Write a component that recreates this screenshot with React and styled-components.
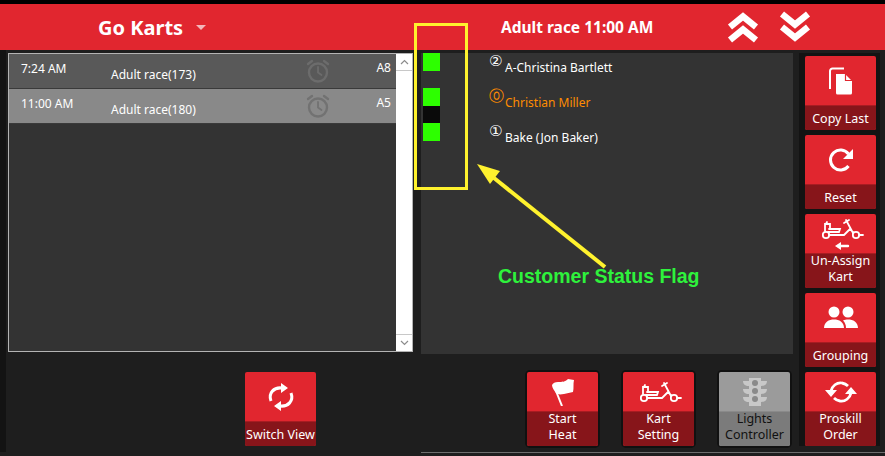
import React from 'react';
import styled, { createGlobalStyle } from 'styled-components';

const GlobalStyle = createGlobalStyle`
  html, body {
    margin: 0;
    padding: 0;
    background: #1e1e1e;
  }
`;

const Page = styled.div`
  position: relative;
  width: 885px;
  height: 456px;
  overflow: hidden;
  background: #1e1e1e;
  color: #fff;
  font-family: 'Noto Sans', 'Open Sans', sans-serif;
  font-size: 12px;
  border-top: 4px solid #000;
  box-sizing: border-box;
`;

const Header = styled.div`
  height: 46px;
  background: #e1262f;
  display: grid;
  grid-template-columns: 501px 204px 1fr;
  align-items: center;
`;

const Venue = styled.div`
  display: flex;
  align-items: center;
  gap: 13px;
  padding-left: 98px;
  font-size: 20px;
  font-weight: 700;
`;

const Caret = styled.span`
  width: 0;
  height: 0;
  border-left: 5px solid transparent;
  border-right: 5px solid transparent;
  border-top: 5px solid #f3b7bb;
`;

const HeatTitle = styled.div`
  font-size: 15.5px;
  font-weight: 700;
`;

const Chevrons = styled.div`
  display: flex;
  gap: 20px;
  padding-left: 22px;
`;

const Body = styled.div`
  display: grid;
  grid-template-columns: 791px 81px;
  padding-left: 2px;
  border-left: 6px solid #131313;
  height: 402px;
`;

const Main = styled.div`
  display: flex;
  flex-direction: column;
`;

const TopPanels = styled.div`
  display: grid;
  grid-template-columns: 405px 372px;
  column-gap: 8px;
  padding-top: 3px;
`;

const ListBox = styled.div`
  height: 299px;
  display: flex;
  border: 1px solid #b4b4b4;
  background: #333;
  box-sizing: border-box;
`;

const Rows = styled.div`
  flex: 1;
`;

const HeatRow = styled.div`
  height: 34px;
  display: grid;
  grid-template-columns: 90px 195px 62px 1fr;
  padding-left: 12px;
  background: ${p => (p.$selected ? '#898989' : '#595959')};
  border-bottom: 1px solid #3a3a3a;
`;

const Time = styled.div`
  line-height: 16px;
  padding-top: 7px;
`;

const RaceName = styled.div`
  line-height: 16px;
  padding-top: 13px;
`;

const AlarmSlot = styled.div`
  padding-top: 5px;
  color: ${p => (p.$selected ? '#727272' : '#6c6c6c')};
`;

const Lane = styled.div`
  line-height: 16px;
  padding: 6px 5px 0 0;
  text-align: right;
`;

const ScrollBar = styled.div`
  width: 16px;
  background: #fff;
  display: flex;
  flex-direction: column;
  justify-content: space-between;
`;

const ScrollButton = styled.div`
  height: 16px;
  display: flex;
  align-items: center;
  justify-content: center;
  border-${p => (p.$down ? 'top' : 'bottom')}: 1px solid #c8c8c8;
`;

const CenterPanel = styled.div`
  height: 301px;
  background: #333;
  display: grid;
  grid-template-columns: 68px 1fr;
`;

const Flags = styled.div`
  display: flex;
  flex-direction: column;
  padding-left: 2px;
`;

const Flag = styled.div`
  width: 17px;
  height: 17.5px;
  background: ${p => p.$color || 'transparent'};
`;

const Names = styled.div`
  display: flex;
  flex-direction: column;
`;

const NameRow = styled.div`
  height: 35px;
  display: flex;
  color: ${p => (p.$active ? '#ff8c00' : '#fff')};
`;

const Mark = styled.span`
  width: 16px;
  font-size: 15px;
  line-height: 17px;
  font-family: 'DejaVu Sans', sans-serif;
`;

const PlayerName = styled.span`
  line-height: 16px;
  padding-top: 7px;
`;

const SideColumn = styled.div`
  display: flex;
  flex-direction: column;
  gap: 5px;
  margin-top: 3px;
  padding: 3px 4px 0 6px;
  background: #131313;
  height: 393px;
  box-sizing: border-box;
`;

const BottomBar = styled.div`
  display: flex;
  padding: 18px 0 0 237px;
`;

const FramedGroup = styled.div`
  display: flex;
  gap: 25px;
  margin-left: 211px;
`;

const ActionButton = styled.div`
  width: 71px;
  height: 74px;
  border-radius: 2px;
  overflow: hidden;
  display: grid;
  grid-template-rows: ${p => (p.$tall ? '39px 35px' : '49px 25px')};
  background: ${p => (p.$off ? '#9b9b9b' : '#e1262f')};
`;

const Frame = styled.div`
  border-radius: 3px;
  box-shadow: 0 0 0 2px #111;
`;

const IconArea = styled.div`
  display: flex;
  align-items: center;
  justify-content: center;
  color: ${p => (p.$off ? '#c8c8c8' : '#fff')};
`;

const Label = styled.div`
  background: ${p => (p.$off ? '#7b7b7b' : '#87151a')};
  color: ${p => (p.$off ? '#111' : '#fff')};
  border-top: 1px solid ${p => (p.$off ? '#8a8a8a' : '#a81c22')};
  text-align: center;
  font-size: 12.5px;
  line-height: 16.5px;
  display: flex;
  align-items: center;
  justify-content: center;
  white-space: pre-line;
  padding: ${p => (p.$tall ? '0 0 4px' : '2px 0 0')};
`;

const FootLine = styled.div`
  position: absolute;
  left: 421px;
  right: 0;
  bottom: 3px;
  height: 1px;
  background: #6e6e6e;
`;

const Highlight = styled.div`
  position: absolute;
  left: 414px;
  top: 19px;
  width: 48px;
  height: 161px;
  border: 3px solid #fff22e;
`;

const Callout = styled.svg`
  position: absolute;
  left: 470px;
  top: 150px;
`;

const CalloutText = styled.div`
  position: absolute;
  left: 498px;
  top: 261px;
  color: #2ef23c;
  font-family: 'Liberation Sans', Arial, sans-serif;
  font-size: 19.5px;
  font-weight: 700;
  white-space: nowrap;
`;

const AlarmIcon = () => (
  <svg width="24" height="24" viewBox="0 0 24 24" fill="none" stroke="currentColor" strokeWidth="2.4" strokeLinecap="round">
    <circle cx="12" cy="13.5" r="9" />
    <path d="M12 8v5.500l3.500 2.500" strokeWidth="1.800" />
    <path d="M2 5l4-3M22 5l-4-3" />
  </svg>
);

const ScrollChevron = ({ down }) => (
  <svg width="9" height="6" viewBox="0 0 9 6" fill="none" stroke="#8c8c8c" strokeWidth="1.2">
    <path d={down ? 'M1 1l3.500 3.500L8 1' : 'M1 5l3.500-3.500L8 5'} />
  </svg>
);

const DoubleChevron = ({ down }) => (
  <svg width="32" height="32" viewBox="0 0 32 32" fill="none" stroke="#fff" strokeWidth="6.5">
    <path d={down ? 'M3 3l13 10.500L29 3M3 16l13 10.500L29 16' : 'M3 16L16 5.500 29 16M3 29l13-10.500L29 29'} />
  </svg>
);

const CopyIcon = () => (
  <svg width="26" height="28" viewBox="0 0 26 28" fill="currentColor">
    <path d="M8 7h9l7 7v12a1.500 1.500 0 0 1-1.500 1.500H9.500A1.500 1.500 0 0 1 8 26z" />
    <path d="M17.500 7v6.500H24" fill="none" stroke="#e1262f" strokeWidth="1.200" />
    <path d="M2 22V4a2.500 2.500 0 0 1 2.500-2.500H16" fill="none" stroke="currentColor" strokeWidth="2" />
  </svg>
);

const ResetIcon = () => (
  <svg width="26" height="26" viewBox="0 0 26 26" fill="none">
    <path d="M20.500 19a10 10 0 1 1 0-12" stroke="currentColor" strokeWidth="3" />
    <path d="M25 2v10H15z" fill="currentColor" />
  </svg>
);

// two arcs with solid heads; wide is the flatter Proskill version
const CycleIcon = ({ wide }) => (
  <svg width={wide ? 32 : 28} height="28" viewBox={wide ? '0 0 32 28' : '0 0 28 28'} fill="none">
    {wide ? (
      <>
        <path d="M6 13c1-5 6-9 11-8 3 .5 5 2 6 3" stroke="currentColor" strokeWidth="2.800" />
        <path d="M26 15c-1 5-6 9-11 8-3-.5-5-2-6-3" stroke="currentColor" strokeWidth="2.800" />
        <path d="M0 12h12l-6 7zM20 16h12l-6-7z" fill="currentColor" />
      </>
    ) : (
      <>
        <path d="M4 18C1 10 7 4 15 5" stroke="currentColor" strokeWidth="3" />
        <path d="M24 10c3 8-3 14-11 13" stroke="currentColor" strokeWidth="3" />
        <path d="M14 0l7 5-7 5zM14 18l-7 5 7 5z" fill="currentColor" />
      </>
    )}
  </svg>
);

const KartIcon = ({ arrow }) => (
  <svg width="46" height={arrow ? 32 : 22} viewBox={arrow ? '0 0 46 32' : '0 0 46 22'} fill="none" stroke="currentColor" strokeWidth="1.800" strokeLinecap="round">
    <circle cx="8" cy="17" r="3.200" />
    <circle cx="38" cy="17" r="3.200" />
    <path d="M11 17h15l6-6M10 14h11l1-3H11M7 13V6h5v5M8 6l1-2M28 2l7 13M26 5l5-3M41 17h4M26 17l6-6 3 3" />
    {arrow && <path d="M30 28H20" strokeWidth="2.400" />}
    {arrow && <path d="M23 24l-6 4 6 4z" fill="currentColor" stroke="none" />}
  </svg>
);

const GroupIcon = () => (
  <svg width="36" height="24" viewBox="0 0 36 24" fill="currentColor">
    <circle cx="11" cy="6" r="5.500" />
    <circle cx="25" cy="6" r="5.500" />
    <path d="M1 22c0-6 5-8.500 10-8.500S21 16 21 22z" />
    <path d="M23 22c0-3-1-5.500-3-7.500 1.500-.7 3.500-1 5-1 5 0 10 2.500 10 8.500z" />
  </svg>
);

const FlagIcon = () => (
  <svg width="24" height="28" viewBox="0 0 24 28" fill="currentColor">
    <path d="M1 7c1-2 3-3 6-3 4 0 7 0 10-3l6 1c-1 4 0 8-1 12-3 1-6 1-9 2-3 .500-6 1-8-1-2-3-4-5-4-8z" />
    <path d="M5 13l6 15" stroke="currentColor" strokeWidth="2" />
  </svg>
);

const LightsIcon = () => (
  <svg width="26" height="30" viewBox="0 0 26 30" fill="currentColor">
    <path d="M7 1h12v28H7z" />
    <path d="M7 4H1c0 3 2 5 6 5zM19 4h6c0 3-2 5-6 5zM7 12H1c0 3 2 5 6 5zM19 12h6c0 3-2 5-6 5zM7 20H1c0 3 2 5 6 5zM19 20h6c0 3-2 5-6 5z" />
    <circle cx="13" cy="6" r="3" fill="#8a8a8a" />
    <circle cx="13" cy="14" r="3" fill="#8a8a8a" />
    <circle cx="13" cy="22" r="3" fill="#8a8a8a" />
  </svg>
);

const heats = [
  { time: '7:24 AM', name: 'Adult race(173)', lane: 'A8' },
  { time: '11:00 AM', name: 'Adult race(180)', lane: 'A5', selected: true },
];

const players = [
  { mark: '②', name: 'A-Christina Bartlett' },
  { mark: '⓪', name: 'Christian Miller', active: true },
  { mark: '①', name: 'Bake (Jon Baker)' },
];

const flags = ['#2dff00', null, '#2dff00', '#0a0a0a', '#2dff00'];

const sideActions = [
  { label: 'Copy Last', icon: <CopyIcon /> },
  { label: 'Reset', icon: <ResetIcon /> },
  { label: 'Un-Assign\nKart', icon: <KartIcon arrow />, tall: true },
  { label: 'Grouping', icon: <GroupIcon /> },
  { label: 'Proskill\nOrder', icon: <CycleIcon wide />, tall: true },
];

const framedActions = [
  { label: 'Start\nHeat', icon: <FlagIcon />, tall: true },
  { label: 'Kart\nSetting', icon: <KartIcon />, tall: true },
  { label: 'Lights\nController', icon: <LightsIcon />, tall: true, off: true },
];

const Action = ({ label, icon, tall, off }) => (
  <ActionButton $tall={tall} $off={off}>
    <IconArea $off={off}>{icon}</IconArea>
    <Label $off={off} $tall={tall}>{label}</Label>
  </ActionButton>
);

const App = () => (
  <Page>
    <GlobalStyle />
    <Header>
      <Venue>Go Karts <Caret /></Venue>
      <HeatTitle>Adult race 11:00 AM</HeatTitle>
      <Chevrons>
        <DoubleChevron />
        <DoubleChevron down />
      </Chevrons>
    </Header>
    <Body>
      <Main>
        <TopPanels>
          <ListBox>
            <Rows>
              {heats.map(h => (
                <HeatRow key={h.time} $selected={h.selected}>
                  <Time>{h.time}</Time>
                  <RaceName>{h.name}</RaceName>
                  <AlarmSlot $selected={h.selected}><AlarmIcon /></AlarmSlot>
                  <Lane>{h.lane}</Lane>
                </HeatRow>
              ))}
            </Rows>
            <ScrollBar>
              <ScrollButton><ScrollChevron /></ScrollButton>
              <ScrollButton $down><ScrollChevron down /></ScrollButton>
            </ScrollBar>
          </ListBox>
          <CenterPanel>
            <Flags>
              {flags.map((color, i) => <Flag key={i} $color={color} />)}
            </Flags>
            <Names>
              {players.map(p => (
                <NameRow key={p.name} $active={p.active}>
                  <Mark>{p.mark}</Mark>
                  <PlayerName>{p.name}</PlayerName>
                </NameRow>
              ))}
            </Names>
          </CenterPanel>
        </TopPanels>
        <BottomBar>
          <Action label="Switch View" icon={<CycleIcon />} />
          <FramedGroup>
            {framedActions.map(a => <Frame key={a.label}><Action {...a} /></Frame>)}
          </FramedGroup>
        </BottomBar>
      </Main>
      <SideColumn>
        {sideActions.map(a => <Action key={a.label} {...a} />)}
      </SideColumn>
    </Body>
    <FootLine />
    <Highlight />
    <Callout width="150" height="120" viewBox="0 0 150 120">
      <path d="M135 113L24 24" stroke="#fff22e" strokeWidth="4" />
      <path d="M7 10L30 17 20 30z" fill="#fff22e" />
    </Callout>
    <CalloutText>Customer Status Flag</CalloutText>
  </Page>
);

export default App;
